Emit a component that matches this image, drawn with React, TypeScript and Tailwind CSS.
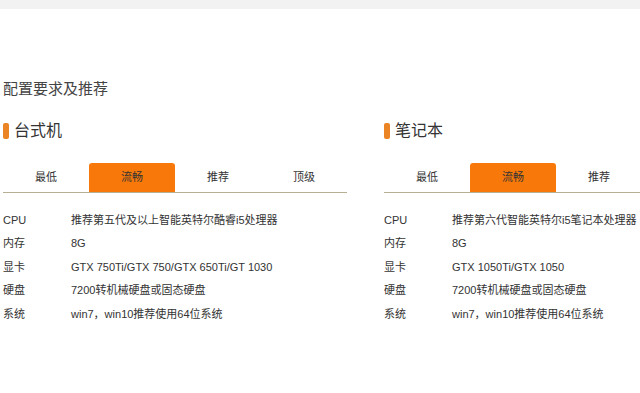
import React from "react";

type Spec = { label: string; value: string };

const tabs = ["最低", "流畅", "推荐", "顶级"];

const desktop: Spec[] = [
  { label: "CPU", value: "推荐第五代及以上智能英特尔酷睿i5处理器" },
  { label: "内存", value: "8G" },
  { label: "显卡", value: "GTX 750Ti/GTX 750/GTX 650Ti/GT 1030" },
  { label: "硬盘", value: "7200转机械硬盘或固态硬盘" },
  { label: "系统", value: "win7，win10推荐使用64位系统" },
];

const laptop: Spec[] = [
  { label: "CPU", value: "推荐第六代智能英特尔i5笔记本处理器" },
  { label: "内存", value: "8G" },
  { label: "显卡", value: "GTX 1050Ti/GTX 1050" },
  { label: "硬盘", value: "7200转机械硬盘或固态硬盘" },
  { label: "系统", value: "win7，win10推荐使用64位系统" },
];

function Section({ title, specs }: { title: string; specs: Spec[] }) {
  return (
    <div className="w-[344px] shrink-0">
      <div className="flex items-center h-[16px]">
        <span className="w-[6px] h-[16px] rounded-[2px] bg-[#eb8424]" />
        <span className="ml-[5px] text-[16px] leading-[16px] text-[#333]">{title}</span>
      </div>
      <div className="mt-[24px] flex border-b border-[#b8ae92]">
        {tabs.map((t) => (
          <div
            key={t}
            className={
              t === "流畅"
                ? "w-[86px] h-[29px] shrink-0 flex items-center justify-center text-[11px] text-[#333] bg-[#f8790a] rounded-t-[3px]"
                : "w-[86px] h-[29px] shrink-0 flex items-center justify-center text-[11px] text-[#333]"
            }
          >
            {t}
          </div>
        ))}
      </div>
      <div className="mt-[15px]">
        {specs.map((s) => (
          <div key={s.label} className="flex items-center h-[23.5px] text-[11px] text-[#333] whitespace-nowrap">
            <span className="w-[68px] shrink-0">{s.label}</span>
            <span>{s.value}</span>
          </div>
        ))}
      </div>
    </div>
  );
}

export default function App() {
  return (
    <div
      className="w-[640px] h-[393px] overflow-hidden bg-white"
      style={{ fontFamily: '"Liberation Sans", "Noto Sans CJK SC", sans-serif' }}
    >
      <div className="h-[9px] bg-[#f2f2f2]" />
      <div className="mt-[70px] pl-[3px] h-[20px] leading-[20px] text-[15px] text-[#444]">配置要求及推荐</div>
      <div className="mt-[24px] flex pl-[3px] gap-[37px]">
        <Section title="台式机" specs={desktop} />
        <Section title="笔记本" specs={laptop} />
      </div>
    </div>
  );
}
